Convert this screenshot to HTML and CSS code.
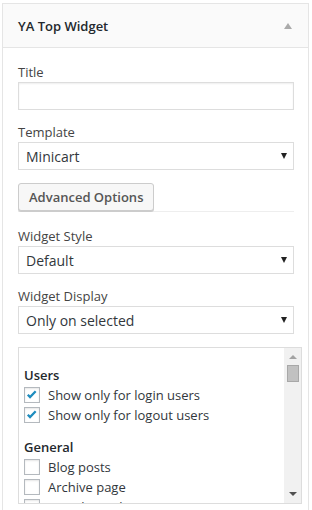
FILE: index.html
```html
<!DOCTYPE html>
<html lang="en">
<head>
    <meta charset="UTF-8">
    <meta name="viewport" content="width=device-width, initial-scale=1.0">
    <title>YA Top Widget</title>
    <link rel="stylesheet" href="styles.css">
</head>
<body>
    <div class="widget">
        <div class="widget-top">
            <h3>YA Top Widget</h3>
            <span class="toggle"></span>
        </div>
        <div class="widget-inside">
            <div class="field first">
                <label for="title">Title</label>
                <input type="text" id="title" class="text-input">
            </div>
            <div class="field">
                <label for="template">Template</label>
                <div class="select-wrap">
                    <select id="template">
                        <option>Minicart</option>
                    </select>
                </div>
            </div>
            <div class="advanced">
                <button type="button">Advanced Options</button>
            </div>
            <div class="field">
                <label for="style">Widget Style</label>
                <div class="select-wrap">
                    <select id="style">
                        <option>Default</option>
                    </select>
                </div>
            </div>
            <div class="field">
                <label for="display">Widget Display</label>
                <div class="select-wrap">
                    <select id="display">
                        <option>Only on selected</option>
                    </select>
                </div>
            </div>
            <div class="checklist">
                <div class="checklist-items">
                    <div class="group">
                        <div class="group-title">Users</div>
                        <label class="check"><span class="box"><svg viewBox="0 0 16 16"><path d="M3.2 7.6l2.6 2.8 6.4-6.6"/></svg></span>Show only for login users</label>
                        <label class="check"><span class="box"><svg viewBox="0 0 16 16"><path d="M3.2 7.6l2.6 2.8 6.4-6.6"/></svg></span>Show only for logout users</label>
                    </div>
                    <div class="group">
                        <div class="group-title">General</div>
                        <label class="check"><span class="box"></span>Blog posts</label>
                        <label class="check"><span class="box"></span>Archive page</label>
                        <label class="check"><span class="box"></span>Search results</label>
                        <label class="check"><span class="box"></span>404 page</label>
                    </div>
                </div>
                <div class="scrollbar">
                    <span class="arrow-up"></span>
                    <span class="thumb"></span>
                    <span class="arrow-down"></span>
                </div>
            </div>
        </div>
    </div>
</body>
</html>
```

FILE: styles.css
```css
body {
    margin: 0;
    font-family: "Open Sans", "Liberation Sans", sans-serif;
    font-size: 13px;
    color: #444;
    background: #fff;
}
.widget {
    width: 307px;
    margin: 3px 0 0 2px;
    border: 1px solid #e5e5e5;
    box-sizing: border-box;
}
.widget-top {
    display: flex;
    align-items: center;
    justify-content: space-between;
    height: 43px;
    padding: 0 16px 0 15px;
    background: #fafafa;
    border-bottom: 1px solid #e5e5e5;
}
.widget-top h3 {
    margin: 0;
    font-size: 13px;
    font-weight: 600;
    color: #23282d;
}
.toggle {
    width: 0;
    height: 0;
    border-left: 4px solid transparent;
    border-right: 4px solid transparent;
    border-bottom: 6px solid #aaa;
}
.widget-inside {
    padding: 14px 14px 20px 15px;
}
.field {
    margin-top: 12px;
}
.field.first {
    margin-top: 0;
}
label {
    display: block;
    line-height: 20px;
}
.text-input {
    display: block;
    width: 276px;
    height: 28px;
    margin: 0;
    border: 1px solid #ddd;
    box-sizing: border-box;
    box-shadow: inset 0 1px 2px rgba(0,0,0,0.07);
    background: #fff;
}
.select-wrap {
    position: relative;
    width: 276px;
}
.select-wrap::after {
    content: '';
    position: absolute;
    right: 7px;
    top: 11px;
    border-left: 3px solid transparent;
    border-right: 3px solid transparent;
    border-top: 6px solid #222;
}
select {
    display: block;
    width: 100%;
    height: 28px;
    margin: 0;
    padding: 0 24px 0 7px;
    border: 1px solid #ddd;
    border-radius: 0;
    box-sizing: border-box;
    background: #fff;
    font-family: inherit;
    font-size: 14px;
    color: #32373c;
    -webkit-appearance: none;
    appearance: none;
}
.advanced {
    margin: 13px 0 14px;
    border-bottom: 1px solid #eee;
}
.advanced button {
    display: block;
    height: 28px;
    padding: 0 10px;
    border: 1px solid #ccc;
    border-radius: 3px;
    background: #f7f7f7;
    box-shadow: 0 1px 0 #ccc;
    font-family: inherit;
    font-size: 13px;
    font-weight: 600;
    color: #555;
    cursor: pointer;
}
.checklist {
    display: flex;
    width: 284px;
    height: 157px;
    margin-top: 13px;
    border: 1px solid #ddd;
    box-sizing: border-box;
    overflow: hidden;
}
.checklist-items {
    flex: 1;
    padding: 18px 0 0 5px;
    overflow: hidden;
}
.group + .group {
    margin-top: 13px;
}
.group-title {
    font-weight: 600;
    line-height: 19px;
    color: #23282d;
}
.check {
    display: flex;
    align-items: center;
    gap: 8px;
    line-height: 20px;
    color: #32373c;
}
.box {
    flex: none;
    width: 16px;
    height: 16px;
    border: 1px solid #b4b9be;
    box-sizing: border-box;
    background: #fff;
    box-shadow: inset 0 1px 2px rgba(0,0,0,0.1);
}
.box svg {
    display: block;
    width: 14px;
    height: 14px;
    fill: none;
    stroke: #1e8cbe;
    stroke-width: 2.6;
}
.scrollbar {
    display: flex;
    flex-direction: column;
    align-items: center;
    width: 17px;
    padding: 7px 0;
    box-sizing: border-box;
    background: #f1f1f1;
}
.arrow-up {
    border-left: 4px solid transparent;
    border-right: 4px solid transparent;
    border-bottom: 4px solid #a3a3a3;
}
.thumb {
    width: 12px;
    height: 17px;
    margin-top: 6px;
    background: #c1c1c1;
    border: 1px solid #a8a8a8;
    box-sizing: border-box;
}
.arrow-down {
    margin-top: auto;
    border-left: 4px solid transparent;
    border-right: 4px solid transparent;
    border-top: 4px solid #505050;
}
```
